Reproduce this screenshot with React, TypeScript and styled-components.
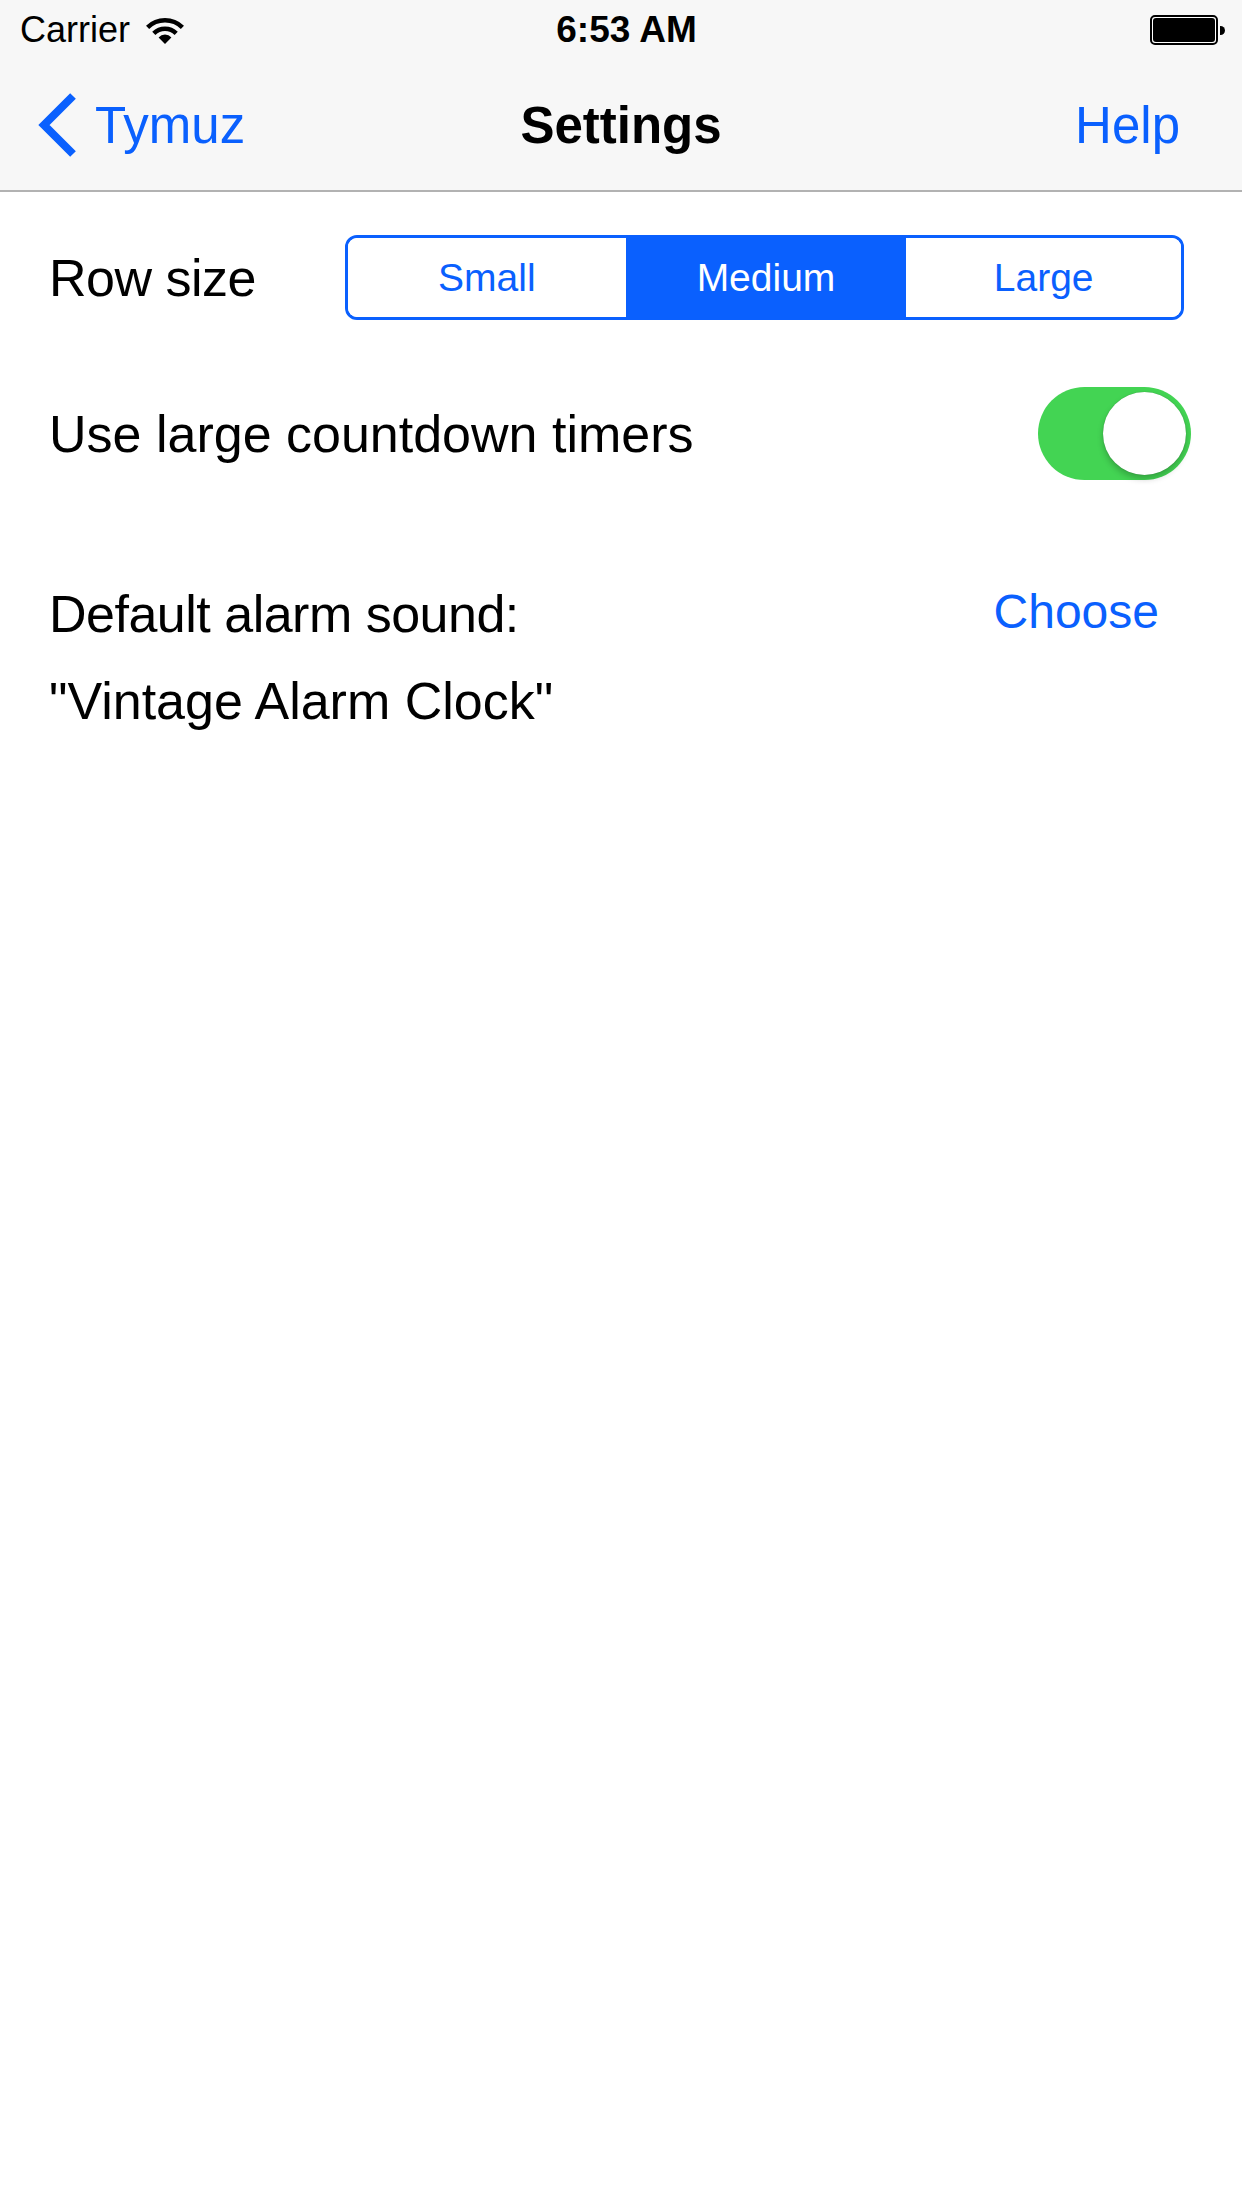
import styled, { createGlobalStyle } from "styled-components";

const blue = "#0a60fe";

const GlobalStyle = createGlobalStyle`
  html, body {
    margin: 0;
    padding: 0;
    background: #ffffff;
  }
  body {
    font-family: "Liberation Sans", Arial, sans-serif;
    color: #000;
  }
`;

const Screen = styled.div`
  width: 1242px;
  min-height: 2208px;
  background: #ffffff;
`;

const Header = styled.header`
  background: #f7f7f7;
  border-bottom: 2px solid #b2b2b2;
`;

const StatusBar = styled.div`
  height: 60px;
  display: grid;
  grid-template-columns: 1fr auto 1fr;
  align-items: center;
  padding: 0 17px 0 20px;
  font-size: 36px;
`;

const Carrier = styled.div`
  display: flex;
  align-items: center;
  gap: 16px;
`;

const Clock = styled.div`
  font-weight: 700;
  font-size: 37px;
  padding-left: 8px;
`;

const Battery = styled.div`
  justify-self: end;
  display: flex;
  align-items: center;
  gap: 2px;
`;

const BatteryBody = styled.div`
  width: 62px;
  height: 24px;
  border: 2px solid #000;
  border-radius: 5px;
  padding: 1px;
  background: #fff;
`;

const BatteryFill = styled.div`
  width: 100%;
  height: 100%;
  background: #000;
  border-radius: 3px;
`;

const BatteryNub = styled.div`
  width: 5px;
  height: 9px;
  background: #000;
  border-radius: 0 5px 5px 0;
`;

const NavBar = styled.nav`
  height: 130px;
  display: grid;
  grid-template-columns: 1fr auto 1fr;
  align-items: center;
  font-size: 51px;
`;

const BackButton = styled.div`
  display: flex;
  align-items: center;
  gap: 18px;
  padding-left: 37px;
  color: ${blue};
`;

const Title = styled.div`
  font-weight: 700;
`;

const HelpButton = styled.div`
  justify-self: end;
  padding-right: 62px;
  color: ${blue};
`;

const Content = styled.main`
  font-size: 52px;
  line-height: 62px;
`;

const Row = styled.div<{ $top: number; $right: number }>`
  display: flex;
  align-items: center;
  justify-content: space-between;
  margin-top: ${(p) => p.$top}px;
  padding: 0 ${(p) => p.$right}px 0 49px;
`;

const Label = styled.span<{ $tight?: boolean }>`
  letter-spacing: ${(p) => (p.$tight ? "-0.5px" : "0")};
`;

const Segmented = styled.div`
  width: 839px;
  height: 85px;
  box-sizing: border-box;
  border: 3px solid ${blue};
  border-radius: 12px;
  display: grid;
  grid-template-columns: repeat(3, 1fr);
  overflow: hidden;
`;

const Segment = styled.div<{ $active?: boolean }>`
  display: flex;
  align-items: center;
  justify-content: center;
  font-size: 39px;
  color: ${(p) => (p.$active ? "#fff" : blue)};
  background: ${(p) => (p.$active ? blue : "#fff")};
  & + & {
    border-left: 3px solid ${blue};
  }
`;

const Switch = styled.div`
  width: 153px;
  height: 93px;
  border-radius: 47px;
  background: #43d453;
  display: flex;
  align-items: center;
  justify-content: flex-end;
  padding-right: 5px;
  box-sizing: border-box;
`;

const Knob = styled.div`
  width: 83px;
  height: 83px;
  border-radius: 50%;
  background: #fff;
  box-shadow: 0 4px 6px rgba(0, 0, 0, 0.22), 0 0 1px rgba(0, 0, 0, 0.3);
`;

const LinkButton = styled.div`
  color: ${blue};
  font-size: 48px;
  margin-top: -4px;
`;

const Value = styled.div`
  margin-top: 25px;
  padding-left: 49px;
`;

const WifiIcon = () => (
  <svg width="38" height="28" viewBox="0 0 38 28">
    <path d="M1.6 11.3 A25 25 0 0 1 36.4 11.3" fill="none" stroke="#000" strokeWidth="4.5" />
    <path d="M7.8 17.4 A16 16 0 0 1 30.2 17.4" fill="none" stroke="#000" strokeWidth="4.5" />
    <path d="M19 28 L12.6 21.4 A8.6 8.6 0 0 1 25.4 21.4 Z" fill="#000" />
  </svg>
);

const Chevron = () => (
  <svg width="40" height="64" viewBox="0 0 40 64">
    <polyline points="36,3 7,32 36,61" fill="none" stroke={blue} strokeWidth="8" />
  </svg>
);

export default function App() {
  return (
    <Screen>
      <GlobalStyle />
      <Header>
        <StatusBar>
          <Carrier>
            Carrier
            <WifiIcon />
          </Carrier>
          <Clock>6:53 AM</Clock>
          <Battery>
            <BatteryBody>
              <BatteryFill />
            </BatteryBody>
            <BatteryNub />
          </Battery>
        </StatusBar>
        <NavBar>
          <BackButton>
            <Chevron />
            Tymuz
          </BackButton>
          <Title>Settings</Title>
          <HelpButton>Help</HelpButton>
        </NavBar>
      </Header>
      <Content>
        <Row $top={43} $right={58}>
          <Label $tight>Row size</Label>
          <Segmented>
            <Segment>Small</Segment>
            <Segment $active>Medium</Segment>
            <Segment>Large</Segment>
          </Segmented>
        </Row>
        <Row $top={67} $right={51}>
          <Label>Use large countdown timers</Label>
          <Switch>
            <Knob />
          </Switch>
        </Row>
        <Row $top={103} $right={83}>
          <Label $tight>Default alarm sound:</Label>
          <LinkButton>Choose</LinkButton>
        </Row>
        <Value>"Vintage Alarm Clock"</Value>
      </Content>
    </Screen>
  );
}
